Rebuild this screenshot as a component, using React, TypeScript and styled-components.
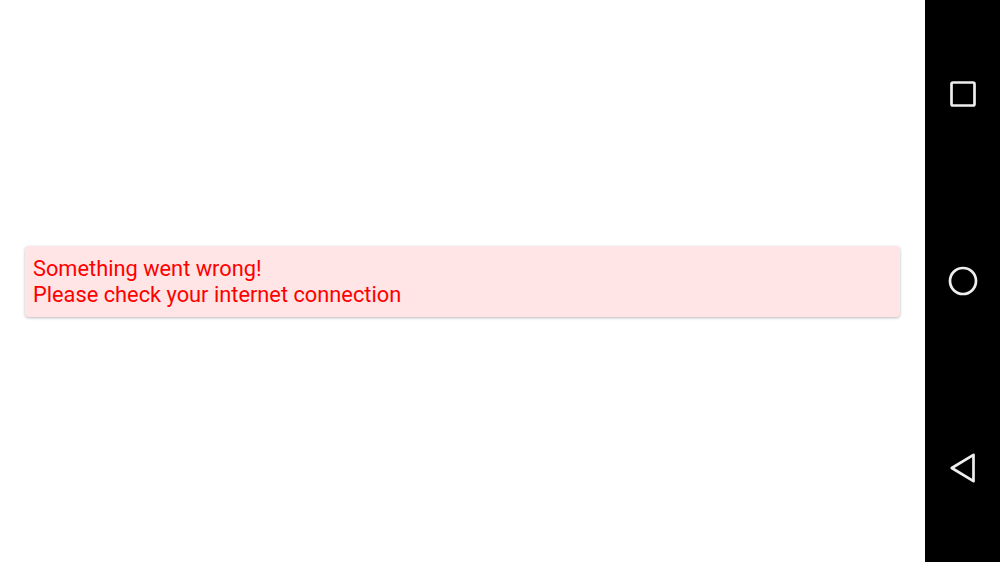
import React from "react";
import styled, { createGlobalStyle } from "styled-components";

const Global = createGlobalStyle`
  html, body { margin: 0; padding: 0; width: 100%; height: 100%; background: #fff; }
  #root { height: 100%; }
`;

const Screen = styled.div`
  display: flex;
  width: 1000px;
  height: 562px;
  overflow: hidden;
`;

const Content = styled.main`
  flex: 1;
  display: flex;
  flex-direction: column;
  justify-content: center;
  padding: 0 25px;
  background: #fff;
`;

const ErrorCard = styled.div`
  background: #ffe5e5;
  border-radius: 4px;
  box-shadow: 0 1px 3px rgba(0, 0, 0, 0.28);
  padding: 10px 8px 9px;
  font-family: Roboto, "Noto Sans", sans-serif;
  font-size: 21.8px;
  line-height: 26px;
  color: #ff0000;
`;

const NavBar = styled.nav`
  width: 75px;
  background: #000;
  display: flex;
  flex-direction: column;
  justify-content: space-around;
  align-items: center;
`;

const NavButton = styled.div`
  width: 40px;
  height: 40px;
  display: flex;
  align-items: center;
  justify-content: center;
`;

export default function App() {
  return (
    <>
      <Global />
      <Screen>
        <Content>
          <ErrorCard>
            Something went wrong!
            <br />
            Please check your internet connection
          </ErrorCard>
        </Content>
        <NavBar>
          <NavButton>
            <svg width="26" height="26" viewBox="0 0 26 26">
              <rect x="1.5" y="1.5" width="23" height="23" rx="1.5" fill="none" stroke="#eee" strokeWidth="2.7" />
            </svg>
          </NavButton>
          <NavButton>
            <svg width="30" height="30" viewBox="0 0 30 30">
              <circle cx="15" cy="15" r="13" fill="none" stroke="#eee" strokeWidth="2.7" />
            </svg>
          </NavButton>
          <NavButton>
            <svg width="26" height="30" viewBox="0 0 26 30">
              <path d="M23.5 1.8 L1.8 15 L23.5 28.2 Z" fill="none" stroke="#eee" strokeWidth="2.7" strokeLinejoin="round" />
            </svg>
          </NavButton>
        </NavBar>
      </Screen>
    </>
  );
}
